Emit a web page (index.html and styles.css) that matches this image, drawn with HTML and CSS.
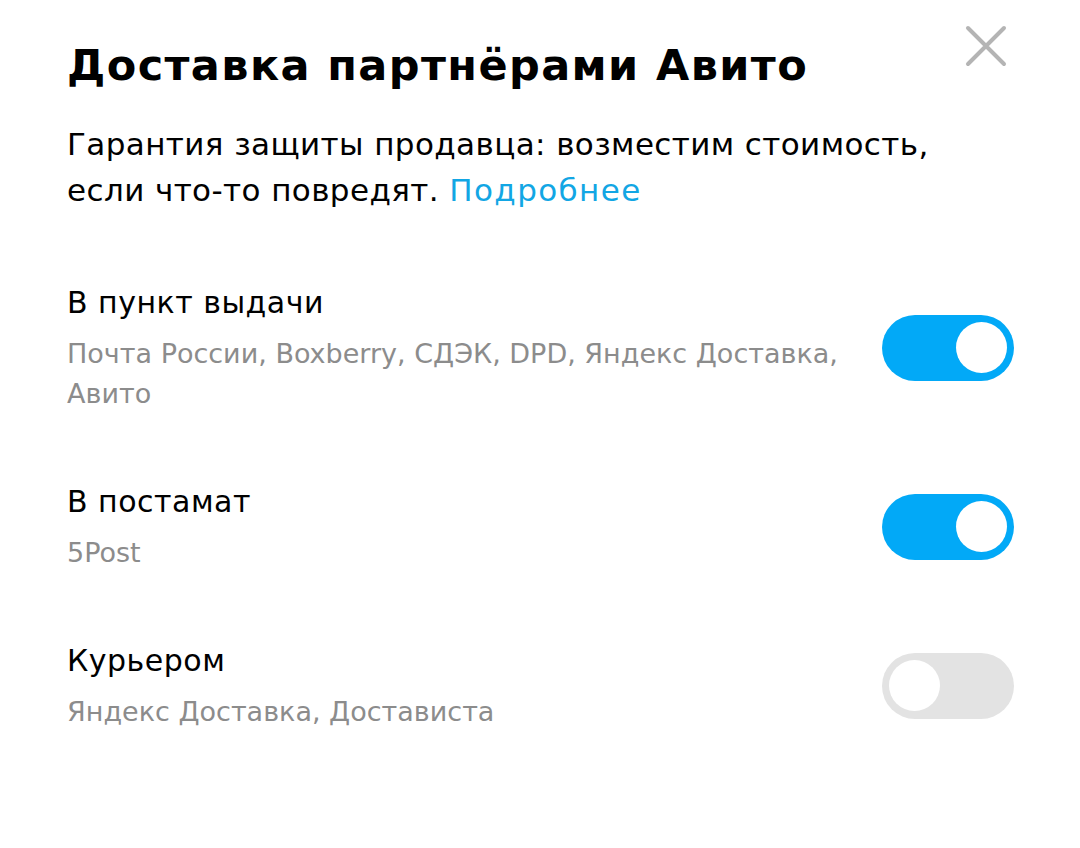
FILE: index.html
```html
<!DOCTYPE html>
<html lang="ru">
<head>
<meta charset="utf-8">
<link rel="stylesheet" href="styles.css">
</head>
<body>
<div class="sheet">
  <div class="header">
    <h1 class="title">Доставка партнёрами Авито</h1>
    <button class="close" aria-label="Закрыть">
      <svg width="44" height="44" viewBox="0 0 44 44"><path d="M4 4 L40 40 M40 4 L4 40" stroke="#b4b4b4" stroke-width="4" stroke-linecap="round" fill="none"/></svg>
    </button>
  </div>
  <p class="lead">Гарантия защиты продавца: возместим стоимость, если что-то повредят. <a class="link" href="#">Подробнее</a></p>

  <div class="options">
    <div class="option">
      <div class="option-text">
        <div class="option-title">В пункт выдачи</div>
        <div class="option-desc">Почта России, Boxberry, СДЭК, DPD, Яндекс Доставка, Авито</div>
      </div>
      <span class="toggle on"><span class="knob"></span></span>
    </div>
    <div class="option">
      <div class="option-text">
        <div class="option-title">В постамат</div>
        <div class="option-desc">5Post</div>
      </div>
      <span class="toggle on"><span class="knob"></span></span>
    </div>
    <div class="option">
      <div class="option-text">
        <div class="option-title">Курьером</div>
        <div class="option-desc">Яндекс Доставка, Достависта</div>
      </div>
      <span class="toggle"><span class="knob"></span></span>
    </div>
  </div>
</div>
</body>
</html>
```

FILE: styles.css
```css
html, body {
  margin: 0;
  padding: 0;
  background: #ffffff;
}
body {
  width: 1080px;
  height: 848px;
  overflow: hidden;
  font-family: "DejaVu Sans", Inter, sans-serif;
  color: #000;
}
.sheet {
  padding: 0 66px 0 67px;
}
.header {
  display: flex;
  justify-content: space-between;
  align-items: flex-start;
  padding-top: 39px;
}
.title {
  margin: 0;
  font-size: 43px;
  line-height: 52px;
  font-weight: 700;
  letter-spacing: 1.4px;
  white-space: nowrap;
}
.close {
  margin: -15px 6px 0 0;
  padding: 0;
  border: 0;
  background: none;
  width: 44px;
  height: 44px;
}
.close svg { display: block; }
.lead {
  margin: 30px 0 0;
  max-width: 900px;
  font-size: 31px;
  line-height: 46px;
  letter-spacing: 0.4px;
}
.link {
  color: #12a6e4;
  text-decoration: none;
  letter-spacing: 1.4px;
}
.options {
  margin-top: 68px;
  display: flex;
  flex-direction: column;
}
.option + .option {
  margin-top: 66px;
}
.option {
  display: flex;
  align-items: center;
  justify-content: space-between;
  gap: 40px;
}
.option-text {
  max-width: 790px;
}
.option-title {
  font-size: 30px;
  line-height: 44px;
  letter-spacing: 0.5px;
}
.option-desc {
  margin-top: 9px;
  font-size: 27px;
  line-height: 40px;
  color: #8c8c8c;
}
.toggle {
  flex: none;
  width: 132px;
  height: 66px;
  border-radius: 33px;
  background: #e3e3e3;
  display: flex;
  align-items: center;
  padding: 0 7px;
  box-sizing: border-box;
}
.toggle.on {
  background: #02a9f7;
  justify-content: flex-end;
}
.knob {
  width: 51px;
  height: 51px;
  border-radius: 50%;
  background: #fff;
}
```
